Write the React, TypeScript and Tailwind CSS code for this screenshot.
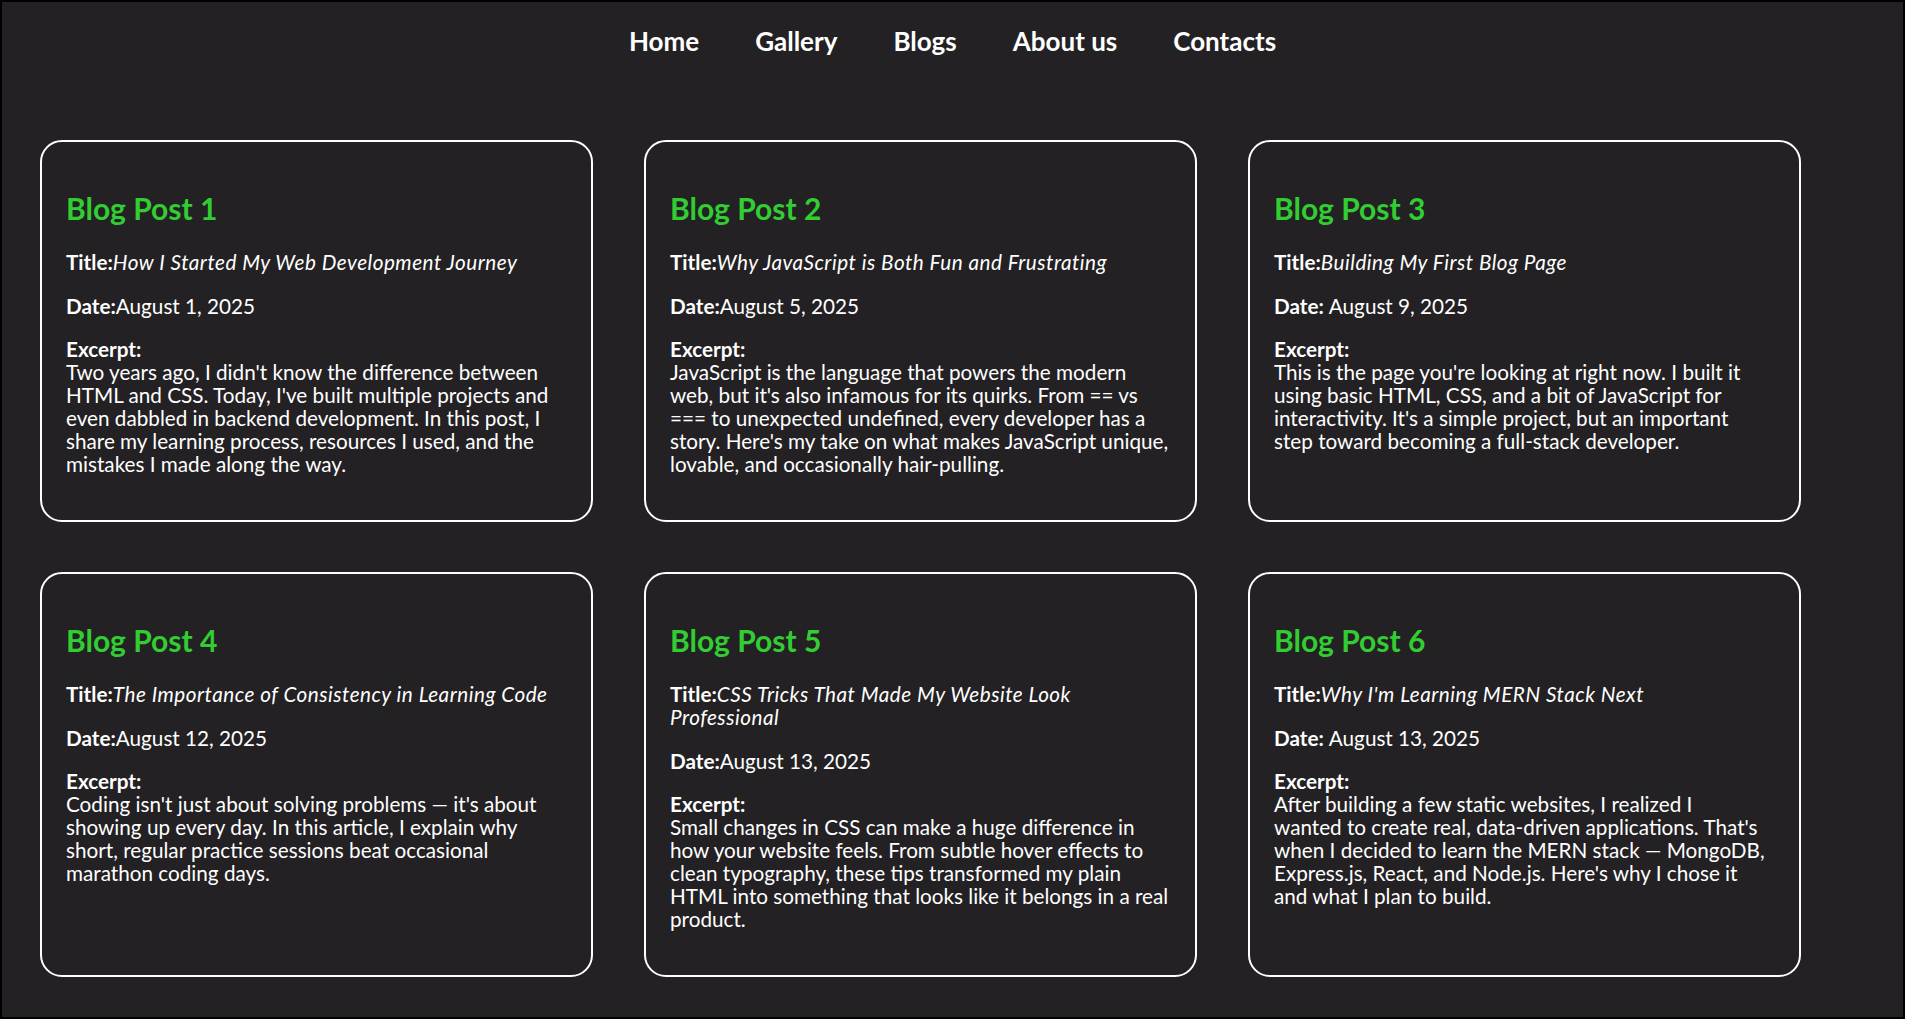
import React from "react";

type Post = {
  n: number;
  title: string[];
  dateLabel: string;
  date: string;
  excerpt: string[];
};

const posts: Post[] = [
  {
    n: 1,
    title: ["How I Started My Web Development Journey"],
    dateLabel: "Date:",
    date: "August 1, 2025",
    excerpt: [
      "Two years ago, I didn't know the difference between",
      "HTML and CSS. Today, I've built multiple projects and",
      "even dabbled in backend development. In this post, I",
      "share my learning process, resources I used, and the",
      "mistakes I made along the way.",
    ],
  },
  {
    n: 2,
    title: ["Why JavaScript is Both Fun and Frustrating"],
    dateLabel: "Date:",
    date: "August 5, 2025",
    excerpt: [
      "JavaScript is the language that powers the modern",
      "web, but it's also infamous for its quirks. From == vs",
      "=== to unexpected undefined, every developer has a",
      "story. Here's my take on what makes JavaScript unique,",
      "lovable, and occasionally hair-pulling.",
    ],
  },
  {
    n: 3,
    title: ["Building My First Blog Page"],
    dateLabel: "Date: ",
    date: "August 9, 2025",
    excerpt: [
      "This is the page you're looking at right now. I built it",
      "using basic HTML, CSS, and a bit of JavaScript for",
      "interactivity. It's a simple project, but an important",
      "step toward becoming a full-stack developer.",
    ],
  },
  {
    n: 4,
    title: ["The Importance of Consistency in Learning Code"],
    dateLabel: "Date:",
    date: "August 12, 2025",
    excerpt: [
      "Coding isn't just about solving problems \u2014 it's about",
      "showing up every day. In this article, I explain why",
      "short, regular practice sessions beat occasional",
      "marathon coding days.",
    ],
  },
  {
    n: 5,
    title: ["CSS Tricks That Made My Website Look", "Professional"],
    dateLabel: "Date:",
    date: "August 13, 2025",
    excerpt: [
      "Small changes in CSS can make a huge difference in",
      "how your website feels. From subtle hover effects to",
      "clean typography, these tips transformed my plain",
      "HTML into something that looks like it belongs in a real",
      "product.",
    ],
  },
  {
    n: 6,
    title: ["Why I'm Learning MERN Stack Next"],
    dateLabel: "Date: ",
    date: "August 13, 2025",
    excerpt: [
      "After building a few static websites, I realized I",
      "wanted to create real, data-driven applications. That's",
      "when I decided to learn the MERN stack \u2014 MongoDB,",
      "Express.js, React, and Node.js. Here's why I chose it",
      "and what I plan to build.",
    ],
  },
];

function Lines({ lines }: { lines: string[] }) {
  return (
    <>
      {lines.map((l, i) => (
        <React.Fragment key={i}>
          {i > 0 && <br />}
          {l}
        </React.Fragment>
      ))}
    </>
  );
}

function Card({ p }: { p: Post }) {
  return (
    <article className="rounded-[22px] border-2 border-white px-[24px] pt-[49px] pb-[44px]">
      <h2 className="text-[30px] font-bold leading-[35px] text-[#32cd32]">
        Blog Post {p.n}
      </h2>
      <p className="mt-[25px] whitespace-nowrap text-[20.7px] leading-[23px] text-white">
        <strong className="font-bold">Title:</strong>
        <em className="italic tracking-[0.5px]">
          <Lines lines={p.title} />
        </em>
      </p>
      <p className="mt-[21px] text-[20.7px] leading-[23px] text-white">
        <strong className="font-bold whitespace-pre">{p.dateLabel}</strong>
        {p.date}
      </p>
      <p className="mt-[20px] whitespace-nowrap text-[20.7px] leading-[23px] text-white">
        <strong className="font-bold">Excerpt:</strong>
        <br />
        <Lines lines={p.excerpt} />
      </p>
    </article>
  );
}

export default function App() {
  const links = ["Home", "Gallery", "Blogs", "About us", "Contacts"];
  return (
    <div
      className="h-[1019px] w-full overflow-hidden border-2 border-black bg-[#232123] text-white"
      style={{ fontFamily: '"Lato", "Open Sans", sans-serif' }}
    >
      <nav className="flex justify-center gap-[56px] pt-[23px]">
        {links.map((l) => (
          <a
            key={l}
            href="#"
            className="text-[26px] font-bold leading-[32px] text-white no-underline"
          >
            {l}
          </a>
        ))}
      </nav>
      <main className="mt-[83px] grid grid-cols-[553px_553px_553px] gap-x-[51px] gap-y-[50px] pl-[38px]">
        {posts.map((p) => (
          <Card key={p.n} p={p} />
        ))}
      </main>
    </div>
  );
}
